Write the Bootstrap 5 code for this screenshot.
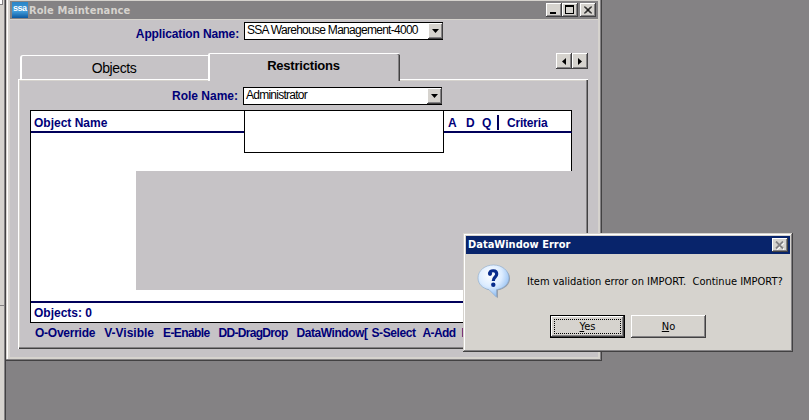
<!DOCTYPE html>
<html lang="en">
<head>
<meta charset="utf-8">
<meta name="viewport" content="width=device-width, initial-scale=1">
<title>Role Maintenance</title>
<link href="https://cdn.jsdelivr.net/npm/bootstrap@5.3.0/dist/css/bootstrap.min.css" rel="stylesheet">
<style>
:root{--face:#d6d3ce;--pane:#c6c3c6;--navy:#00005a;--ink:#000078;--mid:#848284;--dark:#424142}
body{margin:0;width:809px;height:420px;overflow:hidden;background:var(--mid);color:#000;font:12px/14px "Liberation Sans",Arial,sans-serif}
svg{display:block;flex:none}
.t{white-space:pre;flex:none}
.desk{width:809px;height:420px}
.rail{width:6px;height:420px;background:var(--face);border-right:1px solid var(--dark);box-shadow:inset -1px 0 var(--mid)}
.rail-top{height:306px;border-bottom:1px solid var(--mid)}
.rail-nub{width:3px;height:5px;background:#fff;border:solid var(--mid);border-width:0 1px 1px 0}
.win{left:6px;top:0;width:596px;height:361px;padding:1px 4px 4px;background:var(--face);box-shadow:inset -1px -1px var(--dark),inset -2px -2px var(--mid),inset 1px 0 var(--face),inset 2px 0 #fff}
.bar{height:18px;background:var(--mid);color:var(--face);padding:0 2px;letter-spacing:.1px}
.bar svg+.t{margin-left:1px;padding-top:1px}
.ui{font-family:"DejaVu Sans Condensed","DejaVu Sans",sans-serif;font-size:11px}
.raised{background:var(--face);color:#000;border:0;padding:0;border-radius:0;box-shadow:inset -1px -1px var(--dark),inset 1px 1px #fff,inset -2px -2px var(--mid);display:flex;align-items:center;justify-content:center;flex:none}
.cap{width:16px;height:14px}
.cap-close{margin-left:2px}
.body-pane{height:338px;background:var(--pane);border-top:1px solid var(--face)}
.lbl{color:var(--ink);font-weight:700;display:flex;justify-content:flex-end;flex:none}
.app-lbl{width:229px;margin-right:5px;padding-top:5px;letter-spacing:-.13px}
.role-lbl{width:219px;margin-right:5px;padding-top:2px}
.pick{width:199px;height:18px;flex:none;background:#fff;border:1px solid #000;border-right:0;padding-left:2px;font-size:12px}
.pick .raised{width:15px;height:16px}
.app-val{letter-spacing:-.72px}
.role-val{letter-spacing:-.75px}
.app-row{padding-top:2px;height:33px}
.tabs-row{height:26px;padding-left:10px}
.tab-off{width:188px;height:24px;border:solid #fff;border-width:1px 0 0 2px;border-radius:3px 0 0 0;margin-top:2px;font-size:14px;letter-spacing:-.4px;padding-right:2px}
.tab-on{width:192px;height:28px;border:solid #fff;border-width:1px 0 0 2px;border-radius:2px 2px 0 0;box-shadow:inset -1px 0 var(--dark),inset -2px 0 var(--mid);background:var(--pane);font-size:13px;font-weight:700;letter-spacing:-.2px;position:relative;z-index:1;padding:0 3px 3px 0}
.scrollers{margin-right:10px}
.scrollers .raised{width:16px;height:16px}
.panel{margin-left:8px;width:570px;height:270px;border-left:1px solid #fff;border-top:1px solid #fff;box-shadow:inset -1px -1px var(--dark),inset -2px -2px var(--mid),inset 1px 1px var(--face)}
.role-row{padding-top:7px;height:30px}
.grid-box{margin-left:11px;width:542px;height:213px;background:#fff;border:1px solid #000;border-right:0;color:var(--ink);font-weight:700}
.grid-head{height:22px;border-bottom:2px solid var(--navy);border-right:1px solid #000;padding:3px 0 0 3px}
.col-object{width:414px}
.col-a{width:18px}
.col-d{width:16px}
.col-q{width:15px}
.col-criteria{margin-left:8px;letter-spacing:-.2px}
.grid-gap{height:38px;border-right:1px solid #000}
.grid-fill{height:119px;margin-left:105px;background:var(--pane)}
.grid-lead{height:11px}
.grid-foot{height:21px;border-top:2px solid var(--navy);padding-left:3px}
.sep{width:2px;height:15px;background:var(--navy)}
.drop{left:244px;top:110px;width:200px;height:43px;background:#fff;border:1px solid #000;z-index:2}
.keys{color:var(--ink);font-weight:700;padding-left:16px;height:20px;width:560px;overflow:hidden}
.keys .t+.t{margin-left:9px}
.k1{letter-spacing:-.25px}.k3{letter-spacing:-.6px}.k4{letter-spacing:-.7px}.k5{letter-spacing:-.45px}
.keys .t+.k6{letter-spacing:-.42px;margin-left:4px}
.keys .t+.k7{letter-spacing:-.6px;margin-left:7px}
.keys .t+.k8{margin-left:6px}
.dlg{left:463px;top:233px;width:330px;height:119px;padding:3px;background:var(--face);box-shadow:inset -1px -1px var(--dark),inset 1px 1px var(--face),inset -2px -2px var(--mid),inset 2px 2px #fff;z-index:3}
.dlg-bar{height:18px;background:#08246b;color:#fff;padding:0 2px}
.msg{padding:10px 0 0 10px;height:61px}
.msg .t{margin:11px 0 0 15px}
.btns{padding-left:84px;gap:6px}
.push{width:75px;height:23px;font-family:inherit}
.push-def{border:1px solid #000}
.focus-box{width:67px;height:15px;border:1px dotted #000;display:flex;align-items:center;justify-content:center}
</style>
<script src="https://cdn.jsdelivr.net/npm/bootstrap@5.3.0/dist/js/bootstrap.bundle.min.js"></script>
</head>
<body>
<div class="desk position-relative">
<div class="rail"><div class="rail-top"><div class="rail-nub"></div></div></div>

<section class="win position-absolute">
  <div class="bar ui d-flex align-items-center fw-bold">
    <svg width="16" height="16"><defs><linearGradient id="lg" x2="0" y2="1"><stop offset="0" stop-color="#2b86c8"/><stop offset=".6" stop-color="#3f9ad8"/><stop offset="1" stop-color="#0a58a0"/></linearGradient></defs><rect width="16" height="16" fill="url(#lg)"/><text x="1" y="9" font-size="9" font-weight="700" fill="#fff" textLength="14" font-family="Liberation Sans">ssa</text></svg>
    <span class="t">Role Maintenance</span>
    <div class="d-flex ms-auto">
      <button class="raised cap" aria-label="Minimize"><svg width="10" height="10" shape-rendering="crispEdges"><path d="M1 7h6v2H1z"/></svg></button>
      <button class="raised cap" aria-label="Maximize"><svg width="10" height="10" shape-rendering="crispEdges"><path d="M0 0h9v9H0zM1 2v6h7V2z" fill-rule="evenodd"/></svg></button>
      <button class="raised cap cap-close" aria-label="Close"><svg width="8" height="8"><path d="M0 .5l7 7M1 .5l7 7M7 .5l-7 7M8 .5l-7 7" stroke="#000"/></svg></button>
    </div>
  </div>
  <div class="body-pane">
    <div class="app-row d-flex">
      <div class="lbl app-lbl"><span class="t">Application Name:</span></div>
      <div class="pick d-flex"><span class="t app-val">SSA Warehouse Management-4000</span><button class="raised ms-auto" aria-label="Open"><svg width="7" height="4"><path d="M0 0h7L3.500 4z"/></svg></button></div>
    </div>
    <div class="tabs-row d-flex">
      <div class="tab-off d-flex align-items-center justify-content-center"><span class="t">Objects</span></div>
      <div class="tab-on d-flex align-items-center justify-content-center"><span class="t">Restrictions</span></div>
      <div class="d-flex ms-auto scrollers">
        <button class="raised" aria-label="Previous"><svg width="4" height="7"><path d="M4 0v7L0 3.500z"/></svg></button>
        <button class="raised" aria-label="Next"><svg width="4" height="7"><path d="M0 0v7L4 3.500z"/></svg></button>
      </div>
    </div>
    <div class="panel">
      <div class="role-row d-flex">
        <div class="lbl role-lbl"><span class="t">Role Name:</span></div>
        <div class="pick d-flex"><span class="t role-val">Administrator</span><button class="raised ms-auto" aria-label="Open"><svg width="7" height="4"><path d="M0 0h7L3.500 4z"/></svg></button></div>
      </div>
      <div class="grid-box">
        <div class="grid-head d-flex align-items-center">
          <span class="t col-object">Object Name</span><span class="t col-a">A</span><span class="t col-d">D</span><span class="t col-q">Q</span><span class="sep"></span><span class="t col-criteria">Criteria</span>
        </div>
        <div class="grid-gap"></div>
        <div class="grid-fill"></div>
        <div class="grid-lead"></div>
        <div class="grid-foot d-flex align-items-center"><span class="t">Objects: 0</span></div>
      </div>
      <div class="keys d-flex align-items-center"><span class="t k1">O-Override</span><span class="t">V-Visible</span><span class="t k3">E-Enable</span><span class="t k4">DD-DragDrop</span><span class="t k5">DataWindow[</span><span class="t k6">S-Select</span><span class="t k7">A-Add</span><span class="t k8">D</span></div>
    </div>
  </div>
</section>

<div class="drop position-absolute"></div>

<section class="dlg ui position-absolute">
  <div class="dlg-bar d-flex align-items-center justify-content-between fw-bold"><span class="t">DataWindow Error</span><button class="raised cap" aria-label="Close"><svg width="10" height="9"><path d="M2 1.500l7 7M9 1.500l-7 7" stroke="#fff" stroke-width="1.500"/><path d="M1 .5l7 7M8 .5l-7 7" stroke="#848284" stroke-width="1.800"/></svg></button></div>
  <div class="msg d-flex">
    <svg width="36" height="36" viewBox="0 0 36 36"><defs><radialGradient id="bg" cx=".4" cy=".3" r=".75"><stop offset="0" stop-color="#fff"/><stop offset=".5" stop-color="#dcecff"/><stop offset="1" stop-color="#7fb2ee"/></radialGradient></defs>
      <path d="M18 2.500C9.500 2.500 3.500 7.500 3.500 14.500c0 6 4.500 10.500 10.500 11.800l8 8v-8C29 25 34 20.500 34 14.500 34 7.500 27 2.500 18 2.500z" fill="#848e9c" opacity=".75"/>
      <path d="M17.500 1C9 1 2 6.500 2 14c0 6 4.500 10.300 11 11.700l7.500 7.500v-7.500c7.500-1.200 12.500-6 12.500-11.700C33 6.500 26 1 17.500 1z" fill="url(#bg)" stroke="#8aa9cc" stroke-width=".6"/>
      <path d="M13.800 9.200C14 6 20.700 5.600 20.700 9.900c0 3.300-3.400 3.400-3.400 7" fill="none" stroke="#082c8c" stroke-width="3.200"/>
      <circle cx="14" cy="9.800" r="2.100" fill="#082c8c"/><circle cx="17.300" cy="20.700" r="2.200" fill="#082c8c"/></svg>
    <span class="t">Item validation error on IMPORT.  Continue IMPORT?</span>
  </div>
  <div class="btns d-flex">
    <button class="raised push push-def"><span class="focus-box"><span class="t"><u>Y</u>es</span></span></button>
    <button class="raised push"><span class="t"><u>N</u>o</span></button>
  </div>
</section>
</div>
</body>
</html>
